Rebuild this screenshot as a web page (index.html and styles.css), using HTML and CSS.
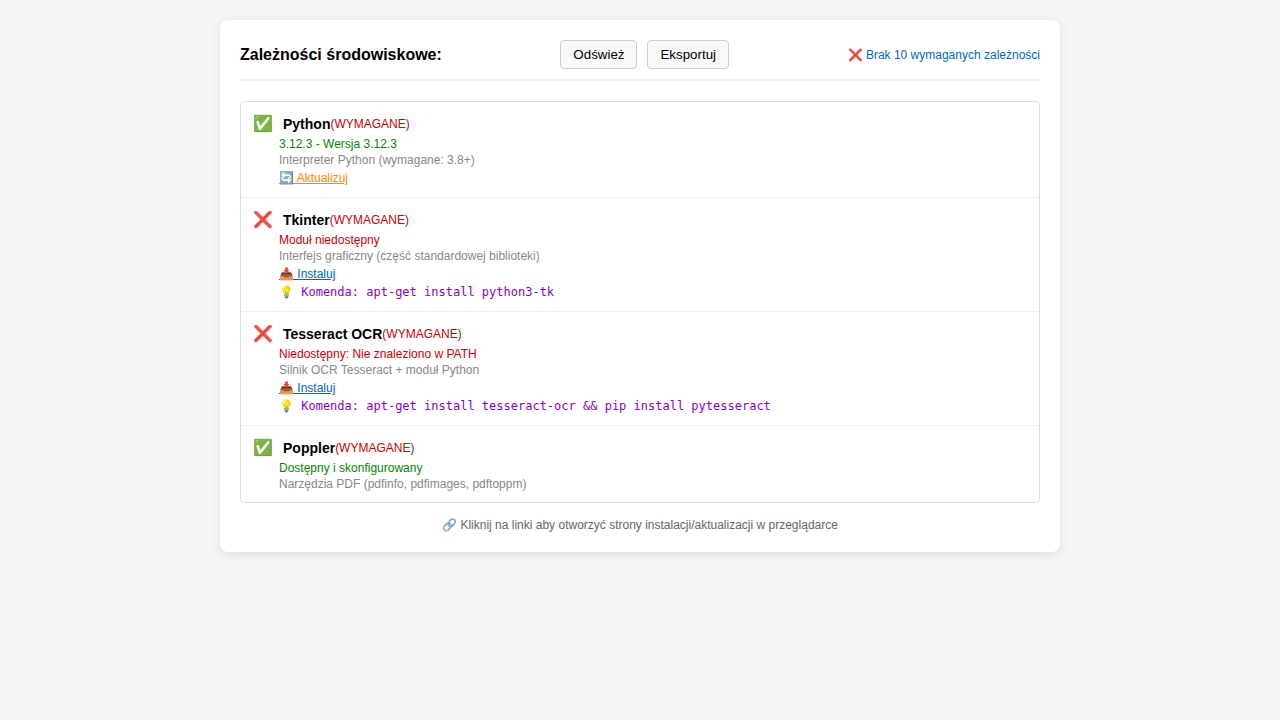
FILE: index.html
```html
<!DOCTYPE html>
<html lang="pl">
<head>
<meta charset="utf-8">
<title>Zależności środowiskowe</title>
<link rel="stylesheet" href="styles.css">
</head>
<body>
<main class="container">
  <header class="header">
    <h1 class="title">Zależności środowiskowe:</h1>
    <div class="buttons">
      <button class="btn" type="button">Odśwież</button>
      <button class="btn" type="button">Eksportuj</button>
    </div>
    <div class="status">❌ Brak 10 wymaganych zależności</div>
  </header>
  <div class="list">
    <section class="item">
      <div class="item-header"><span class="icon">✅</span><h2 class="name">Python</h2><span class="required">(WYMAGANE)</span></div>
      <div class="details">
        <div class="ok">3.12.3 - Wersja 3.12.3</div>
        <div class="description">Interpreter Python (wymagane: 3.8+)</div>
        <div class="action"><a class="link update" href="#">🔄 Aktualizuj</a></div>
      </div>
    </section>
    <section class="item">
      <div class="item-header"><span class="icon">❌</span><h2 class="name">Tkinter</h2><span class="required">(WYMAGANE)</span></div>
      <div class="details">
        <div class="error">Moduł niedostępny</div>
        <div class="description">Interfejs graficzny (część standardowej biblioteki)</div>
        <div class="action"><a class="link" href="#">📥 Instaluj</a></div>
        <div class="command">💡 Komenda: apt-get install python3-tk</div>
      </div>
    </section>
    <section class="item">
      <div class="item-header"><span class="icon">❌</span><h2 class="name">Tesseract OCR</h2><span class="required">(WYMAGANE)</span></div>
      <div class="details">
        <div class="error">Niedostępny: Nie znaleziono w PATH</div>
        <div class="description">Silnik OCR Tesseract + moduł Python</div>
        <div class="action"><a class="link" href="#">📥 Instaluj</a></div>
        <div class="command">💡 Komenda: apt-get install tesseract-ocr &amp;&amp; pip install pytesseract</div>
      </div>
    </section>
    <section class="item">
      <div class="item-header"><span class="icon">✅</span><h2 class="name">Poppler</h2><span class="required">(WYMAGANE)</span></div>
      <div class="details">
        <div class="ok">Dostępny i skonfigurowany</div>
        <div class="description">Narzędzia PDF (pdfinfo, pdfimages, pdftoppm)</div>
      </div>
    </section>
  </div>
  <footer class="footer">🔗 Kliknij na linki aby otworzyć strony instalacji/aktualizacji w przeglądarce</footer>
</main>
</body>
</html>
```
FILE: styles.css
```css
* {
  box-sizing: border-box;
}

body {
  margin: 0;
  padding: 20px;
  background: #f5f5f5;
  font-family: "Liberation Sans", Arial, sans-serif;
  font-size: 12px;
  line-height: 14px;
}

.container {
  max-width: 840px;
  margin: 0 auto;
  padding: 20px;
  background: #fff;
  border-radius: 8px;
  box-shadow: 0 2px 10px rgba(0, 0, 0, 0.1);
}

.header {
  display: flex;
  justify-content: space-between;
  align-items: center;
  margin-bottom: 20px;
  padding-bottom: 10px;
  border-bottom: 2px solid #eee;
}

.title {
  margin: 0;
  font-size: 16px;
  line-height: 18px;
}

.buttons {
  display: flex;
  gap: 10px;
}

.btn {
  padding: 6px 12px;
  border: 1px solid #ccc;
  border-radius: 4px;
  background: #f9f9f9;
  color: #000;
  font-family: inherit;
  line-height: 15px;
}

.status {
  color: #0066cc;
}

.list {
  border: 1px solid #ddd;
  border-radius: 4px;
}

.item {
  padding: 12px;
  border-bottom: 1px solid #eee;
}

.item:last-child {
  padding-bottom: 11px;
  border-bottom: 0;
}

.item-header {
  display: flex;
  align-items: center;
  margin-bottom: 3px;
}

.icon {
  width: 30px;
  font-size: 16px;
  line-height: 20px;
}

.name {
  margin: 0;
  font-size: 14px;
  line-height: 16px;
}

.required,
.error {
  color: #cc0000;
}

.ok {
  color: #008800;
}

.details {
  margin-left: 26px;
}

.description {
  margin-top: 2px;
  color: #888;
}

.action,
.command {
  margin-top: 4px;
}

.link {
  color: #0066cc;
}

.update {
  color: #ff8800;
}

.command {
  color: #8800cc;
  font-family: "DejaVu Sans Mono", monospace;
}

.footer {
  margin-top: 15px;
  color: #666;
  text-align: center;
}
```
